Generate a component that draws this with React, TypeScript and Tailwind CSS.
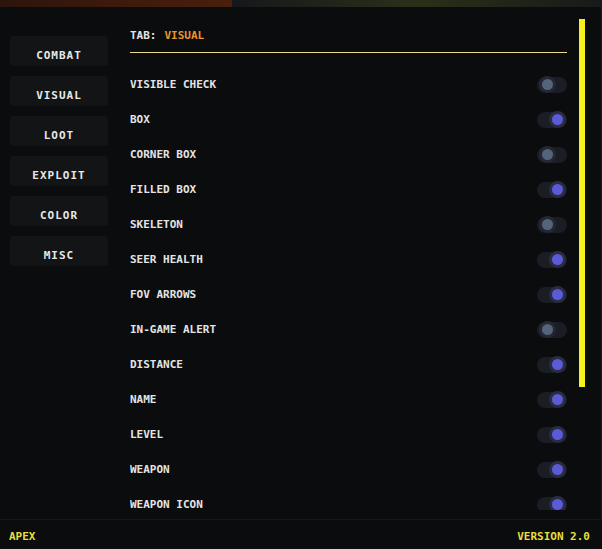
import { useState } from 'react'

const tabs = ['Combat', 'Visual', 'Loot', 'Exploit', 'Color', 'Misc']

const options: [string, boolean][] = [
  ['Visible Check', false],
  ['Box', true],
  ['Corner Box', false],
  ['Filled Box', true],
  ['Skeleton', false],
  ['Seer Health', true],
  ['FOV Arrows', true],
  ['In-Game Alert', false],
  ['Distance', true],
  ['Name', true],
  ['Level', true],
  ['Weapon', true],
  ['Weapon Icon', true],
]

function Toggle({ on, onClick }: { on: boolean; onClick: () => void }) {
  return (
    <button onClick={onClick} className="relative w-[30px] h-[16px] rounded-full bg-[#1b1d25]">
      <span
        className={
          on
            ? 'absolute top-[2.5px] left-[14.5px] size-[11px] rounded-full bg-[#5b5bd8] ring-[3px] ring-[#2a2c44]'
            : 'absolute top-[2.5px] left-[4.5px] size-[11px] rounded-full bg-[#55647a] ring-[3px] ring-[#242832]'
        }
      />
    </button>
  )
}

export default function App() {
  const [active, setActive] = useState('Visual')
  const [values, setValues] = useState(options.map((o) => o[1]))

  return (
    <div className="w-[602px] h-[549px] overflow-hidden bg-[#0a0c0e] text-[#e4e4e4] uppercase font-bold text-[11px] font-['DejaVu_Sans_Mono',monospace]">
      {/* game background peeking above the window */}
      <div className="flex h-[7px]">
        <div className="w-[232px] bg-gradient-to-r from-[#2c140c] via-[#3d1a0c] to-[#4a1f0c]" />
        <div className="flex-1 bg-gradient-to-r from-[#15181a] via-[#2a3018] to-[#171a18]" />
      </div>

      <div className="flex h-[512px] border-r border-[#1a1c1f]">
        <div className="w-[120px] pl-[10px] pt-[29px] flex flex-col gap-[10px]">
          {tabs.map((t) => (
            <button
              key={t}
              onClick={() => setActive(t)}
              className="w-[98px] h-[30px] pt-[10px] flex items-center justify-center rounded-[3px] bg-[#121416] tracking-[1px] text-[#e8e8e8] uppercase"
            >
              {t}
            </button>
          ))}
        </div>

        <div className="w-[437px] ml-[10px] pt-[20px] h-[503px] overflow-hidden">
          <div className="h-[16px] pt-[2px] flex items-center gap-[8px]">
            <span>Tab:</span>
            <span className="text-[#e8952c]">{active}</span>
          </div>
          <div className="mt-[9px] h-px bg-[#ead98a]" />
          <div className="mt-[14px]">
            {options.map(([label], i) => (
              <div key={label} className="h-[35px] flex items-center justify-between">
                <span className="pt-[2px]">{label}</span>
                <Toggle
                  on={values[i]}
                  onClick={() => setValues(values.map((v, j) => (j === i ? !v : v)))}
                />
              </div>
            ))}
          </div>
        </div>

        <div className="w-[29px] pl-[12px] pt-[12px]">
          <div className="w-[6px] h-[368px] bg-[#f8f01c]" />
        </div>
      </div>

      <div className="h-[30px] border-t border-[#16181b] flex items-center justify-between pl-[9px] pr-[12px] pt-[6px] text-[#e6df3c]">
        <span>Apex</span>
        <span>Version 2.0</span>
      </div>
    </div>
  )
}
